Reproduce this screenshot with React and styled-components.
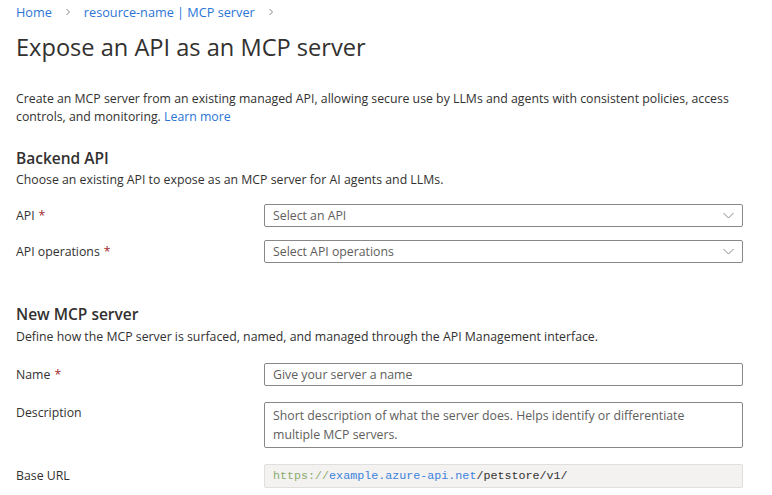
import React from "react";
import styled, { createGlobalStyle } from "styled-components";

const GlobalStyle = createGlobalStyle`
  * { box-sizing: border-box; }
  body {
    margin: 0;
    background: #ffffff;
    font-family: "Open Sans", "Noto Sans", sans-serif;
    color: #323130;
  }
`;

const Page = styled.div`
  padding: 2px 29px 0 16px;
  font-size: 12.3px;
`;

const Crumbs = styled.nav`
  display: flex;
  align-items: center;
  gap: 12px;
  height: 20px;
  font-size: 12.7px;
`;

const Crumb = styled.a`
  color: #2b75d6;
  text-decoration: none;
`;

const Sep = styled.span`
  color: #8a8886;
  display: flex;
  align-items: center;
`;

const Title = styled.h1`
  margin: 9px 0 0;
  font-size: 23.6px;
  font-weight: 400;
  line-height: 32px;
  color: #323130;
`;

const Intro = styled.p`
  margin: 27px 0 0;
  line-height: 18px;
`;

const Link = styled.a`
  color: #2b75d6;
  text-decoration: none;
`;

const SectionTitle = styled.h2`
  margin: ${(p) => p.$top}px 0 0;
  font-size: 15.5px;
  font-weight: 600;
  line-height: 22px;
`;

const SectionText = styled.p`
  margin: ${(p) => p.$top ?? 2}px 0 0;
  line-height: 18px;
`;

const Fields = styled.div`
  display: grid;
  grid-template-columns: 248px 1fr;
  row-gap: ${(p) => p.$gap}px;
  margin-top: ${(p) => p.$top}px;
  align-items: start;
`;

const Label = styled.div`
  line-height: 18px;
  padding-top: ${(p) => p.$pad ?? 3}px;
`;

const Star = styled.span`
  color: #a4262c;
  margin-left: 4px;
`;

const Box = styled.div`
  display: flex;
  align-items: ${(p) => (p.$multi ? "flex-start" : "center")};
  justify-content: space-between;
  min-height: ${(p) => (p.$multi ? 46 : 23)}px;
  padding: ${(p) => (p.$multi ? "3px 8px" : "0 8px")};
  border: 1px solid #8a8886;
  border-radius: 2px;
  color: #605e5c;
  line-height: 19px;
`;

const ReadOnly = styled.div`
  display: flex;
  align-items: center;
  height: 24px;
  padding: 0 8px;
  background: #f3f2f1;
  border: 1px solid #e1dfdd;
  border-radius: 2px;
  font-family: "Liberation Mono", "DejaVu Sans Mono", monospace;
  font-size: 11.7px;
  color: #323130;
`;

const Scheme = styled.span`
  color: #8aab6c;
`;

const Host = styled.span`
  color: #3c82dc;
`;

const Chevron = () => (
  <svg width="8" height="8" viewBox="0 0 8 8">
    <path d="M2.5 1 L5.5 4 L2.5 7" fill="none" stroke="#8a8886" strokeWidth="1" />
  </svg>
);

const Down = () => (
  <svg width="11" height="7" viewBox="0 0 11 7">
    <path d="M0.5 1 L5.5 6 L10.5 1" fill="none" stroke="#8a8886" strokeWidth="1" />
  </svg>
);

const App = () => (
  <Page>
    <GlobalStyle />
    <Crumbs>
      <Crumb href="#">Home</Crumb>
      <Sep><Chevron /></Sep>
      <Crumb href="#">resource-name | MCP server</Crumb>
      <Sep><Chevron /></Sep>
    </Crumbs>
    <Title>Expose an API as an MCP server</Title>
    <Intro>
      Create an MCP server from an existing managed API, allowing secure use by LLMs and agents with consistent policies, access
      controls, and monitoring. <Link href="#">Learn more</Link>
    </Intro>

    <SectionTitle $top={21}>Backend API</SectionTitle>
    <SectionText>Choose an existing API to expose as an MCP server for AI agents and LLMs.</SectionText>
    <Fields $top={15} $gap={13}>
      <Label>API<Star>*</Star></Label>
      <Box>Select an API<Down /></Box>
      <Label>API operations<Star>*</Star></Label>
      <Box>Select API operations<Down /></Box>
    </Fields>

    <SectionTitle $top={40}>New MCP server</SectionTitle>
    <SectionText $top={3}>Define how the MCP server is surfaced, named, and managed through the API Management interface.</SectionText>
    <Fields $top={17} $gap={16}>
      <Label>Name<Star>*</Star></Label>
      <Box>Give your server a name</Box>
      <Label $pad={2}>Description</Label>
      <Box $multi>
        Short description of what the server does. Helps identify or differentiate
        multiple MCP servers.
      </Box>
      <Label $pad={3}>Base URL</Label>
      <ReadOnly>
        <Scheme>https://</Scheme>
        <Host>example.azure-api.net</Host>
        /petstore/v1/
      </ReadOnly>
    </Fields>
  </Page>
);

export default App;
